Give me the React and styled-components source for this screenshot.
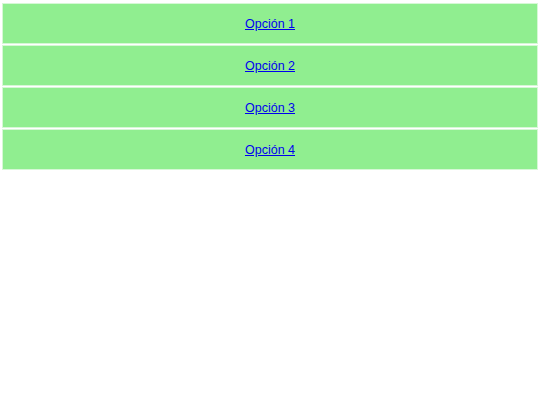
import React from "react";
import styled, { createGlobalStyle } from "styled-components";

const GlobalStyle = createGlobalStyle`
  body {
    margin: 0;
    background: #ffffff;
    font-family: "Liberation Sans", Arial, sans-serif;
  }
`;

const Menu = styled.ul`
  list-style: none;
  margin: 0;
  padding: 3px 2px 2px;
  display: flex;
  flex-direction: column;
  gap: 1px;
`;

const Item = styled.li`
  background: #90ee90;
  border: 1px solid #d6f8d6;
  height: 41px;
  box-sizing: border-box;
  display: flex;
  align-items: center;
  justify-content: center;
`;

const Link = styled.a`
  color: #0000ee;
  font-size: 12.5px;
  text-decoration: underline;
`;

const options = ["Opción 1", "Opción 2", "Opción 3", "Opción 4"];

const App = () => {
  return (
    <>
      <GlobalStyle />
      <Menu>
        {options.map((o) => (
          <Item key={o}>
            <Link href="#">{o}</Link>
          </Item>
        ))}
      </Menu>
    </>
  );
};

export default App;
